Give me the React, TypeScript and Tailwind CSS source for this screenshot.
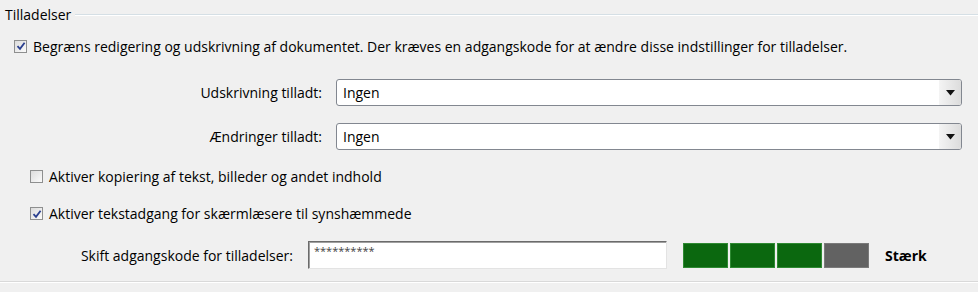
import React from "react";

function Check({ checked }: { checked?: boolean }) {
	return (
		<span className="w-[13px] h-[13px] shrink-0 border border-[#8e8f8f] bg-gradient-to-br from-[#dcdcdc] to-[#fbfbfb] flex items-center justify-center">
			{checked && (
				<svg width="10" height="10" viewBox="0 0 10 10">
					<path d="M1.5 5.2 L4 7.8 L8.6 1.8" fill="none" stroke="#2a3f8f" strokeWidth="1.8" />
				</svg>
			)}
		</span>
	);
}

function Select({ value }: { value: string }) {
	return (
		<div className="flex-1 h-[27px] flex border border-[#828790] rounded-[3px] bg-white overflow-hidden">
			<span className="flex-1 flex items-center pl-[6px] text-[#000]">{value}</span>
			<span className="w-[22px] flex items-center justify-center bg-gradient-to-r from-[#f4f4f4] to-[#dcdcdc]">
				<svg width="9" height="6" viewBox="0 0 9 6">
					<path d="M0 0 H9 L4.5 5.5 Z" fill="#111" />
				</svg>
			</span>
		</div>
	);
}

export default function App() {
	return (
		<div
			className="w-[978px] h-[292px] bg-[#f0f0f0] text-[14px] text-[#000] overflow-hidden"
			style={{ fontFamily: '"Open Sans", "Noto Sans", sans-serif' }}
		>
			{/* Fieldset title */}
			<div className="flex items-center h-[30px] pl-[5px]">
				<span className="leading-none">Tilladelser</span>
				<span className="flex-1 ml-[4px] border-t border-[#d5dfe5] border-b-white border-b h-0" />
			</div>

			<div className="flex items-center gap-[6px] pl-[14px] h-[32px]">
				<Check checked />
				<span>Begræns redigering og udskrivning af dokumentet. Der kræves en adgangskode for at ændre disse indstillinger for tilladelser.</span>
			</div>

			<div className="flex flex-col gap-[17px] pt-[17px] pr-[16px]">
				<div className="flex items-center">
					<span className="w-[322px] text-right">Udskrivning tilladt:</span>
					<span className="w-[14px]" />
					<Select value="Ingen" />
				</div>
				<div className="flex items-center">
					<span className="w-[322px] text-right">Ændringer tilladt:</span>
					<span className="w-[14px]" />
					<Select value="Ingen" />
				</div>
			</div>

			<div className="flex items-center gap-[6px] pl-[30px] h-[37px] mt-[8px]">
				<Check />
				<span>Aktiver kopiering af tekst, billeder og andet indhold</span>
			</div>
			<div className="flex items-center gap-[6px] pl-[30px] h-[37px]">
				<Check checked />
				<span>Aktiver tekstadgang for skærmlæsere til synshæmmede</span>
			</div>

			<div className="flex items-center h-[40px] mt-[3px]">
				<span className="w-[293px] text-right">Skift adgangskode for tilladelser:</span>
				<span className="w-[15px]" />
				<div className="w-[359px] h-[28px] bg-white border border-t-[#6b6b6b] border-l-[#6b6b6b] border-r-[#e3e3e3] border-b-[#e3e3e3] shadow-[inset_1px_1px_0_#a0a0a0] pl-[5px] pt-[2px] text-[11px] leading-[14px] text-[#444]">
					**********
				</div>
				<div className="flex gap-[2px] ml-[16px]">
					<span className="w-[45px] h-[25px] bg-[#0b680f] border border-[#2e8a32]" />
					<span className="w-[45px] h-[25px] bg-[#0b680f] border border-[#2e8a32]" />
					<span className="w-[45px] h-[25px] bg-[#0b680f] border border-[#2e8a32]" />
					<span className="w-[45px] h-[25px] bg-[#626262] border border-[#7a7a7a]" />
				</div>
				<span className="ml-[16px] font-bold">Stærk</span>
			</div>

			<div className="mt-[6px] border-t border-[#d9d9d9] border-b border-b-white" />
		</div>
	);
}
